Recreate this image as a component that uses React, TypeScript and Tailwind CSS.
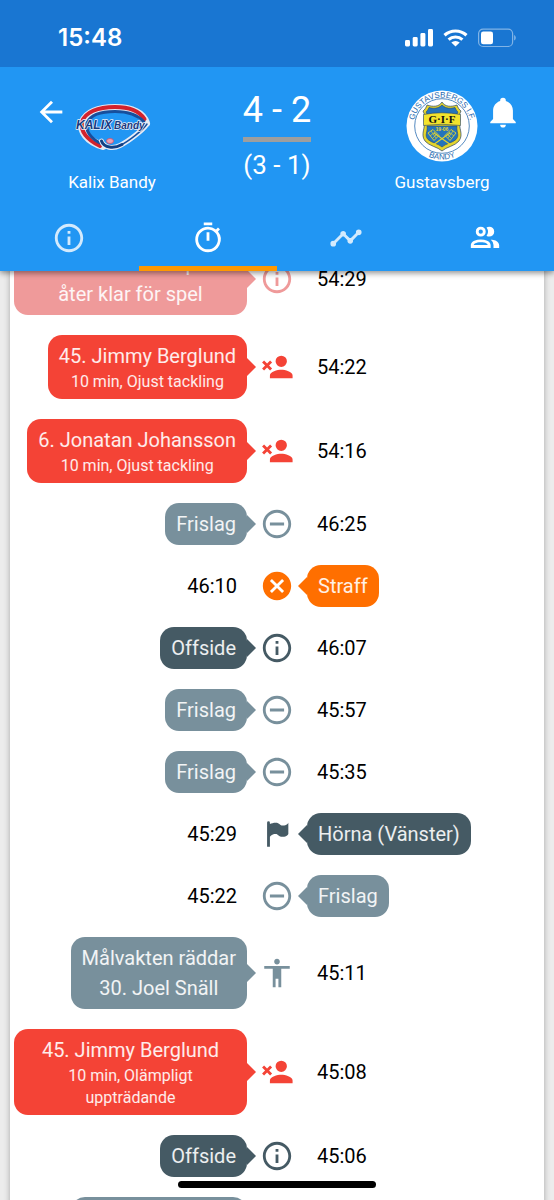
import type { ReactNode } from "react";
import {
  MdAccessibility,
  MdArrowBack,
  MdCancel,
  MdInfoOutline,
  MdOutlineTimer,
  MdRemoveCircleOutline,
} from "react-icons/md";

type Tone = "red" | "pink" | "gray" | "slate" | "orange";

type MatchEvent = {
  side: "home" | "away";
  time: string;
  tone: Tone;
  icon: ReactNode;
  title: string[];
  detail?: string;
};

const bubbleTone: Record<Tone, string> = {
  red: "bg-[#f44336]",
  pink: "bg-[#ef9a9a]",
  gray: "bg-[#78909c]",
  slate: "bg-[#455a64]",
  orange: "bg-[#ff6f00]",
};

const inkTone: Record<Tone, string> = {
  red: "text-[#f44336]",
  pink: "text-[#ef9a9a]",
  gray: "text-[#78909c]",
  slate: "text-[#455a64]",
  orange: "text-[#ff6f00]",
};

function Glyph({ d }: { d: string }) {
  return (
    <svg viewBox="0 0 24 24" width="34" height="34" fill="currentColor" className="shrink-0" aria-hidden="true">
      <path d={d} />
    </svg>
  );
}

const personOutPath =
  "M15,14C12.33,14 7,15.33 7,18V20H23V18C23,15.33 17.67,14 15,14M15,12A4,4 0 0,0 19,8A4,4 0 0,0 15,4A4,4 0 0,0 11,8A4,4 0 0,0 15,12M5,9.59L7.12,7.46L8.54,8.88L6.41,11L8.54,13.12L7.12,14.54L5,12.41L2.88,14.54L1.46,13.12L3.59,11L1.46,8.88L2.88,7.46L5,9.59Z";
const flagPath =
  "M6,3A1,1 0 0,1 7,4V4.88C8.06,4.44 9.5,4 11,4C14,4 14,6 16,6C19,6 20,4 20,4V12C20,12 19,14 16,14C13,14 13,12 11,12C8,12 7,14 7,14V21H5V4A1,1 0 0,1 6,3Z";
const bellPath =
  "M21,19V20H3V19L5,17V11C5,7.9 7.03,5.17 10,4.29C10,4.19 10,4.1 10,4A2,2 0 0,1 12,2A2,2 0 0,1 14,4C14,4.1 14,4.19 14,4.29C16.97,5.17 19,7.9 19,11V17L21,19M14,21A2,2 0 0,1 12,23A2,2 0 0,1 10,21";
const trendPath =
  "M3,14L3.5,14.07L8.07,9.5C7.89,8.85 8.06,8.11 8.59,7.59C9.37,6.8 10.63,6.8 11.41,7.59C11.94,8.11 12.11,8.85 11.93,9.5L14.5,12.07L15,12C15.18,12 15.35,12 15.5,12.07L19.07,8.5C19,8.35 19,8.18 19,8A2,2 0 0,1 21,6A2,2 0 0,1 23,8A2,2 0 0,1 21,10C20.82,10 20.65,10 20.5,9.93L16.93,13.5C17,13.65 17,13.82 17,14A2,2 0 0,1 15,16A2,2 0 0,1 13,14L13.07,13.5L10.5,10.93C10.18,11 9.82,11 9.5,10.93L4.93,15.5L5,16A2,2 0 0,1 3,18A2,2 0 0,1 1,16A2,2 0 0,1 3,14Z";
const squadPath =
  "M13.07 10.41A5 5 0 0 0 13.07 4.59A3.39 3.39 0 0 1 15 4A3.5 3.5 0 0 1 15 11A3.39 3.39 0 0 1 13.07 10.41M5.5 7.5A3.5 3.5 0 1 1 9 11A3.5 3.5 0 0 1 5.5 7.5M7.5 7.5A1.5 1.5 0 1 0 9 6A1.5 1.5 0 0 0 7.5 7.5M16 17V19H2V17S2 13 9 13 16 17 16 17M14 17C13.86 16.22 12.67 15 9 15S4.07 16.31 4 17M15.95 13A5.32 5.32 0 0 1 18 17V19H22V17S22 13.37 15.94 13Z";

const info = <MdInfoOutline size={34} />;
const freeStroke = <MdRemoveCircleOutline size={34} />;
const keeper = <MdAccessibility size={34} />;
const personOut = <Glyph d={personOutPath} />;

const events: MatchEvent[] = [
  { side: "home", time: "54:29", tone: "pink", icon: info, title: ["12. Albert Kempe åter\u00a0klar\u00a0för\u00a0spel"] },
  { side: "home", time: "54:22", tone: "red", icon: personOut, title: ["45. Jimmy Berglund"], detail: "10 min, Ojust tackling" },
  { side: "home", time: "54:16", tone: "red", icon: personOut, title: ["6. Jonatan Johansson"], detail: "10 min, Ojust tackling" },
  { side: "home", time: "46:25", tone: "gray", icon: freeStroke, title: ["Frislag"] },
  { side: "away", time: "46:10", tone: "orange", icon: <MdCancel size={34} />, title: ["Straff"] },
  { side: "home", time: "46:07", tone: "slate", icon: info, title: ["Offside"] },
  { side: "home", time: "45:57", tone: "gray", icon: freeStroke, title: ["Frislag"] },
  { side: "home", time: "45:35", tone: "gray", icon: freeStroke, title: ["Frislag"] },
  { side: "away", time: "45:29", tone: "slate", icon: <Glyph d={flagPath} />, title: ["Hörna (Vänster)"] },
  { side: "away", time: "45:22", tone: "gray", icon: freeStroke, title: ["Frislag"] },
  { side: "home", time: "45:11", tone: "gray", icon: keeper, title: ["Målvakten räddar", "30. Joel Snäll"] },
  { side: "home", time: "45:08", tone: "red", icon: personOut, title: ["45. Jimmy Berglund"], detail: "10 min, Olämpligt uppträdande" },
  { side: "home", time: "45:06", tone: "slate", icon: info, title: ["Offside"] },
  { side: "home", time: "45:02", tone: "gray", icon: keeper, title: ["Målvakten räddar", "30. Joel Snäll"] },
];

function Bubble({ event }: { event: MatchEvent }) {
  const home = event.side === "home";
  return (
    <div className={`relative rounded-[14px] px-[11px] py-[6px] text-center text-white/90 ${bubbleTone[event.tone]}`}>
      {event.title.map((line) => (
        <p key={line} className="text-[20px] leading-[30px]">
          {line}
        </p>
      ))}
      {event.detail && <p className="text-[16px] leading-[22px]">{event.detail}</p>}
      <svg
        viewBox="0 0 9 18"
        className={`absolute top-1/2 h-[18px] w-[9px] -translate-y-1/2 ${inkTone[event.tone]} ${home ? "left-full" : "right-full"}`}
        aria-hidden="true"
      >
        <path d={home ? "M0 0L9 9L0 18Z" : "M9 0L0 9L9 18Z"} fill="currentColor" />
      </svg>
    </div>
  );
}

function EventRow({ event }: { event: MatchEvent }) {
  const home = event.side === "home";
  const time = <time className="px-[10px] text-[20px] leading-[30px] text-black">{event.time}</time>;
  const bubble = <Bubble event={event} />;
  return (
    <li className="grid grid-cols-[1fr_60px_1fr] items-center px-1">
      <div className="flex justify-end">{home ? bubble : time}</div>
      <div className={`flex justify-center ${inkTone[event.tone]}`}>{event.icon}</div>
      <div className="flex justify-start">{home ? time : bubble}</div>
    </li>
  );
}

function StatusBar() {
  return (
    <div className="flex h-[67px] items-center justify-between bg-[#1976d2] pt-2 pr-[38px] pl-[58px] text-white">
      <span className="font-[Inter,sans-serif] text-[24px] leading-[30px] font-semibold">15:48</span>
      <svg viewBox="0 0 112 20" width="112" height="20" fill="currentColor" aria-hidden="true">
        <rect x="1" y="12" width="5" height="6.5" rx="1.4" />
        <rect x="8.7" y="9" width="5" height="9.5" rx="1.4" />
        <rect x="16.4" y="5" width="5" height="13.5" rx="1.4" />
        <rect x="24" y="1" width="5" height="17.5" rx="1.4" />
        <g fill="none" stroke="currentColor" strokeWidth="3.2">
          <path d="M40.5 7.2a16.5 16.5 0 0 1 22 0" />
          <path d="M44.6 11.6a10.4 10.4 0 0 1 13.8 0" />
        </g>
        <path d="M47.3 14.6a6.2 6.2 0 0 1 8.4 0L51.5 18.6Z" />
        <rect x="74.6" y="1.1" width="34" height="17.4" rx="4.5" fill="none" stroke="currentColor" strokeOpacity=".45" strokeWidth="1.2" />
        <rect x="77" y="3.4" width="12" height="12.8" rx="2.3" />
        <path d="M110.2 7v5.6c2-.9 2-4.7 0-5.6z" opacity=".5" />
      </svg>
    </div>
  );
}

function KalixLogo() {
  return (
    <svg viewBox="0 0 72 72" width="72" height="72" className="shrink-0 overflow-visible" role="img" aria-label="Kalix Bandy">
      <g fill="none" strokeLinecap="round" strokeLinejoin="round">
        <path d="M70 33C66 22 54 18 39 18C22 18 10 23 7 32C4 41 11 51 27 56" stroke="#e3e8f2" strokeWidth="8" />
        <path d="M68.5 29C63 20.5 52 17 39 17C22 17 9 22 6 32C4 41 11 50 24 56" stroke="#d3222c" strokeWidth="4" />
        <path d="M68 32C61 24 51 21.600 39 21.600C24 21.600 14 26 11 33C9 41 15 49 26 54" stroke="#174f9c" strokeWidth="3" />
        <path d="M71 34C67 40 53 51 44 55.500C37 59 28 58 25.500 51" stroke="#e7ecf6" strokeWidth="5" />
        <path d="M71 34C67 40 53 51 44 55.500" stroke="#174f9c" strokeWidth="1.500" />
        <path d="M46 54.500C38 59 28 58 25.500 51" stroke="#123f83" strokeWidth="3" />
      </g>
      <ellipse cx="34" cy="51" rx="3.500" ry="2.500" fill="#e9a1b5" stroke="#d94b67" strokeWidth=".8" />
      <g fontFamily="Liberation Sans, sans-serif" fontStyle="italic" fontWeight="700" fill="#17397e" stroke="#edf1fa" strokeWidth="1.400" paintOrder="stroke" strokeLinejoin="round">
        <text x="0" y="38.500" fontSize="12">KALIX</text>
        <text x="38" y="38.500" fontSize="10">Bandy</text>
      </g>
    </svg>
  );
}

function GustavsbergLogo() {
  return (
    <svg viewBox="0 0 72 72" width="72" height="72" className="shrink-0" role="img" aria-label="Gustavsberg">
      <defs>
        <path id="crest-top" d="M7.500 36a28.500 28.500 0 0 1 57 0" />
        <path id="crest-bottom" d="M2.500 36a33.500 33.500 0 0 0 67 0" />
      </defs>
      <circle cx="36" cy="36" r="35.500" fill="#fff" />
      <circle cx="36" cy="36" r="27.300" fill="none" stroke="#2a6cb0" strokeWidth=".8" />
      <g fontFamily="Liberation Sans, sans-serif" fontSize="8" fill="#2768ae" textAnchor="middle">
        <text>
          <textPath href="#crest-top" startOffset="50%">GUSTAVSBERGS I.F.</textPath>
        </text>
        <text>
          <textPath href="#crest-bottom" startOffset="50%">BANDY</textPath>
        </text>
      </g>
      <path d="M36 12C39 17 45 17 51 15C52 18 53.500 20 55 21C53 24 54 27 54 30C52 38 58 44 53 51C49 56 40 57 36 61C32 57 23 56 19 51C14 44 20 38 18 30C18 27 19 24 17 21C18.500 20 20 18 21 15C27 17 33 17 36 12Z" fill="#e4d52c" stroke="#26446b" strokeWidth=".7" />
      <path d="M36 15C40 19 45 18.500 49 17.500C50 20 51 21 52 22L50.500 25H21.500L20 22C21 21 22 20 23 17.500C27 18.500 32 19 36 15Z" fill="#2474bb" stroke="#26446b" strokeWidth=".6" />
      <path d="M21 36H51C50 42 54 45 50 49.500C46 53 40 53.500 36 57C32 53.500 26 53 22 49.500C18 45 22 42 21 36Z" fill="#2474bb" stroke="#26446b" strokeWidth=".6" />
      <g stroke="#e4d52c" fill="none" strokeWidth="1.100">
        <path d="M28 43L45 55M44 43L27 55" />
        <path d="M22 43l5-3.500 6 6-5 5zM50 43l-5-3.500-6 6 5 5z" strokeWidth=".9" />
        <path d="M24 46l5-4M27 48l4-4M48 46l-5-4M45 48l-4-4M25 41l5 7M47 41l-5 7" strokeWidth=".7" />
      </g>
      <path d="M17.500 24.500Q36 21 54.500 24.500V35.500Q36 33 17.500 35.500Z" fill="#f3e32c" stroke="#26446b" strokeWidth=".6" />
      <text x="36" y="33" textAnchor="middle" fontFamily="Liberation Serif, serif" fontWeight="700" fontSize="11" fill="#111">G·I·F</text>
      <text x="36" y="41" textAnchor="middle" fontFamily="Liberation Sans, sans-serif" fontWeight="700" fontSize="5" fill="#e4d52c">19·06</text>
    </svg>
  );
}

function Team({ name, logo }: { name: string; logo: ReactNode }) {
  return (
    <div className="flex w-[88px] flex-col items-center">
      {logo}
      <span className="mt-2 text-[17px] leading-6 whitespace-nowrap">{name}</span>
    </div>
  );
}

const tabs = [
  { label: "Info", icon: <MdInfoOutline size={34} />, tint: "text-white/80", active: false },
  { label: "Händelser", icon: <MdOutlineTimer size={34} />, tint: "text-white", active: true },
  { label: "Statistik", icon: <Glyph d={trendPath} />, tint: "text-white/80", active: false },
  { label: "Trupper", icon: <Glyph d={squadPath} />, tint: "text-white", active: false },
];

export default function App() {
  return (
    <div className="flex h-screen flex-col overflow-hidden bg-[#ececec] font-[Roboto,sans-serif]">
      <header className="relative z-10 shrink-0 bg-[#2196f3] text-white shadow-[0_2px_6px_rgba(0,0,0,0.45)]">
        <StatusBar />
        <div className="flex items-start justify-between px-[34px] pt-[23px] pb-[10px]">
          <div className="flex">
            <button type="button" aria-label="Tillbaka" className="mt-[5px] flex h-[34px] w-[34px] items-center justify-center">
              <MdArrowBack size={34} />
            </button>
            <Team name="Kalix Bandy" logo={<KalixLogo />} />
          </div>
          <div className="flex flex-col items-center">
            <span className="text-[36px] leading-10">4 - 2</span>
            <span className="mt-[7px] h-[5px] w-full bg-[#9e9e9e]" />
            <span className="mt-2 text-[26px] leading-[30px]">(3 - 1)</span>
          </div>
          <div className="flex">
            <Team name="Gustavsberg" logo={<GustavsbergLogo />} />
            <button type="button" aria-label="Aviseringar" className="mt-[5px] flex h-[34px] w-[34px] items-center justify-center">
              <Glyph d={bellPath} />
            </button>
          </div>
        </div>
        <nav className="grid grid-cols-4">
          {tabs.map((tab) => (
            <button
              key={tab.label}
              type="button"
              aria-label={tab.label}
              className={`flex h-[67px] items-center justify-center border-b-[5px] pt-[5px] ${tab.tint} ${tab.active ? "border-[#ff9800]" : "border-transparent"}`}
            >
              {tab.icon}
            </button>
          ))}
        </nav>
      </header>
      <main className="mx-[10px] -mt-7 flex-1 bg-white shadow-[0_0_6px_rgba(0,0,0,0.3)]">
        <ol className="flex flex-col gap-5">
          {events.map((event) => (
            <EventRow key={event.time} event={event} />
          ))}
        </ol>
      </main>
      <div className="fixed bottom-3 left-1/2 z-20 h-[7px] w-[198px] -translate-x-1/2 rounded-full bg-black" />
    </div>
  );
}
